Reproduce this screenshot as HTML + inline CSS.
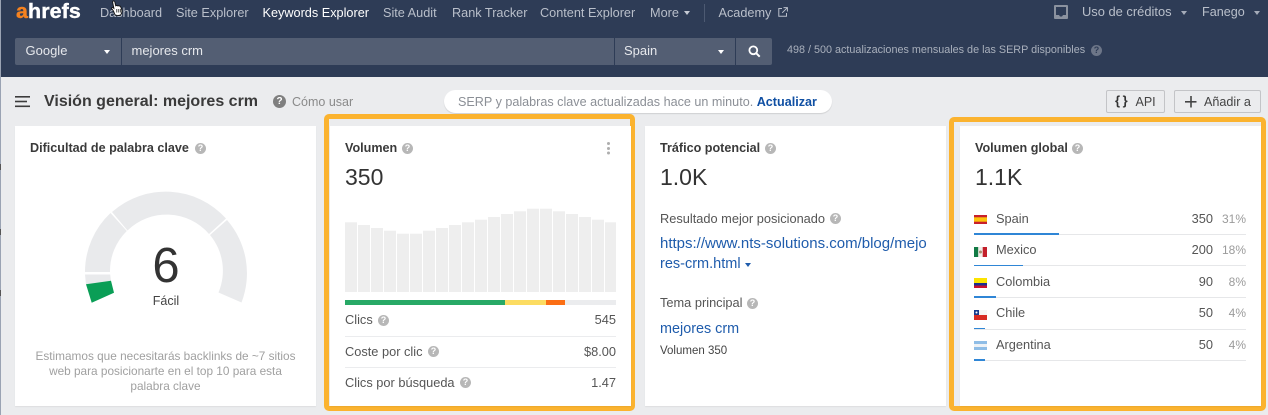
<!DOCTYPE html>
<html lang="es">
<head>
<meta charset="utf-8">
<title>Ahrefs</title>
<style>
html,body{margin:0;padding:0}
body{position:relative;width:1268px;height:415px;overflow:hidden;background:#ebecee;font-family:"Liberation Sans",Arial,sans-serif;color:#444}
.t{position:absolute;white-space:nowrap;line-height:16px}
.n{top:5px;font-size:12.7px;color:#b9bfca}
.b{position:absolute}
.h{position:absolute;width:11px;height:11px;border-radius:50%;background:#b7b7b7;color:#fff;font-size:9px;font-weight:bold;line-height:11px;text-align:center}
.card{position:absolute;top:126px;width:301px;height:280px;background:#fff;box-shadow:0 1px 1px rgba(0,0,0,.06)}
.title{font-size:12.6px;font-weight:bold;color:#3a3a3a;top:140px}
.big{font-size:23px;color:#333;top:165px;line-height:24px}
.r{font-size:12.8px;color:#555}
.orange{position:absolute;border:5px solid #fbb32f;border-radius:5px;box-sizing:border-box}
.tri{position:absolute;width:0;height:0;border-left:3px solid transparent;border-right:3px solid transparent;border-top:4px solid #fff}
.link{color:#1f5cac}
</style>
</head>
<body>
<div class="b" style="left:0;top:0;width:1268px;height:77px;background:#2e3c56"></div>
<div class="b" style="left:0;top:0;width:1px;height:415px;background:#9aa3b3"></div>
<div class="b" style="left:0;top:164px;width:1px;height:6px;background:#555"></div>
<div class="b" style="left:0;top:229px;width:1px;height:6px;background:#555"></div>
<div class="b" style="left:0;top:290px;width:1px;height:6px;background:#555"></div>

<div class="t" style="left:16px;top:0;font-size:20px;line-height:24px;font-weight:bold;color:#fff;letter-spacing:.1px;transform:scaleX(1.07);transform-origin:0 0;-webkit-text-stroke:.4px #fff"><span style="color:#f5821f;-webkit-text-stroke:.4px #f5821f">a</span>hrefs</div>

<div class="t n" style="left:100px">Dashboard</div>
<div class="t n" style="left:176px">Site Explorer</div>
<div class="t n" style="left:262.5px;color:#fff">Keywords Explorer</div>
<div class="t n" style="left:383px">Site Audit</div>
<div class="t n" style="left:452px">Rank Tracker</div>
<div class="t n" style="left:540px">Content Explorer</div>
<div class="t n" style="left:650px">More</div>
<div class="tri" style="left:684px;top:11px;border-top-color:#c6cbd4"></div>
<div class="b" style="left:704px;top:4px;width:1px;height:18px;background:#4d5a72"></div>
<div class="t n" style="left:718.5px">Academy</div>
<svg class="b" style="left:778px;top:7px" width="10" height="10" viewBox="0 0 10 10" fill="none" stroke="#b9bfca" stroke-width="1"><path d="M4 1.5H.8v7.7h7.700V6M5.500.6h3.900v3.900M9.200.8 4.200 5.800"/></svg>

<svg class="b" style="left:110px;top:0" width="15" height="18" viewBox="0 0 15 18"><path d="M3 1.2c.7-.6 1.600-.2 1.800.7l.9 4 .6-.3c.5-.2 1-.1 1.300.3.500-.3 1.100-.2 1.500.2.500-.2 1.100-.1 1.400.4l1.400 3.500c.3 1 .2 2-.3 3l-.8 1.800c-1.800.8-4 .8-5.800 0L3.500 11 1.700 8.700c-.5-.7.400-1.600 1.200-1.100l1 .8L2.700 2.600c-.1-.5 0-1 .3-1.400z" fill="#fff" stroke="#111" stroke-width=".9"/><path d="M6.800 9v3.500M8.800 9v3.500M10.700 9v3.500" stroke="#111" stroke-width=".8"/></svg>

<svg class="b" style="left:1054px;top:5px" width="14" height="14" viewBox="0 0 14 14"><path fill-rule="evenodd" d="M1 0h12a1 1 0 0 1 1 1v12a1 1 0 0 1-1 1H1a1 1 0 0 1-1-1V1a1 1 0 0 1 1-1zM2 2v8h3l1 1.500h2l1-1.500h3V2z" fill="#8b929f"/></svg>
<div class="t n" style="left:1082px;top:4px;font-size:12.9px">Uso de créditos</div>
<div class="tri" style="left:1181px;top:11px;border-top-color:#a5acb9"></div>
<div class="t n" style="left:1202px;top:4px;font-size:12.6px">Fanego</div>
<div class="tri" style="left:1253.5px;top:11px;border-top-color:#a5acb9"></div>

<div class="b" style="left:15px;top:38px;width:106px;height:27px;background:#535e73;border-radius:2px 0 0 2px"></div>
<div class="b" style="left:122px;top:38px;width:491.5px;height:27px;background:#535e73"></div>
<div class="b" style="left:614.5px;top:38px;width:120.5px;height:27px;background:#535e73"></div>
<div class="b" style="left:736px;top:38px;width:36px;height:27px;background:#535e73;border-radius:0 2px 2px 0"></div>
<div class="t" style="left:25.500px;top:43px;font-size:13px;color:#e6e8ec">Google</div>
<div class="tri" style="left:104px;top:49.5px;border-top-color:#fff"></div>
<div class="t" style="left:131.500px;top:43px;font-size:13px;color:#e6e8ec">mejores crm</div>
<div class="t" style="left:624px;top:43px;font-size:13px;color:#e6e8ec">Spain</div>
<div class="tri" style="left:718px;top:49.5px;border-top-color:#fff"></div>
<svg class="b" style="left:748px;top:45px" width="13" height="13" viewBox="0 0 13 13" fill="none" stroke="#fff"><circle cx="5.300" cy="5.300" r="3.900" stroke-width="1.800"/><path d="M8.200 8.200l3.500 3.500" stroke-width="2"/></svg>
<div class="t" style="left:787px;top:42px;font-size:10.8px;color:#a9b0bc">498 / 500 actualizaciones mensuales de las SERP disponibles</div>
<div class="h" style="left:1091px;top:45px;background:#6d7688;color:#2e3c56">?</div>

<svg class="b" style="left:15px;top:96px" width="16" height="12" viewBox="0 0 16 12" fill="#3c3c3c"><rect width="15" height="1.600"/><rect y="4.700" width="12" height="1.600"/><rect y="9.500" width="15" height="1.600"/></svg>
<div class="t" style="left:44px;top:94px;font-size:16px;font-weight:bold;color:#3a3a3a">Visión general: mejores crm</div>
<div class="h" style="left:273px;top:95px;width:13px;height:13px;line-height:13px;font-size:10px;background:#7f7f7f">?</div>
<div class="t" style="left:292px;top:94px;font-size:12.500px;color:#8a8a8a">Cómo usar</div>

<div class="b" style="left:444px;top:90px;width:388px;height:23px;background:#fff;border-radius:12px;box-shadow:0 1px 1px rgba(0,0,0,.12)"></div>
<div class="t" style="left:458px;top:94px;font-size:12.6px;color:#8b8f96">SERP y palabras clave actualizadas hace un minuto. <b style="color:#0f4fa3">Actualizar</b></div>

<div class="b" style="left:1106px;top:90px;width:59px;height:23px;box-sizing:border-box;border:1px solid #c3c4c7;border-radius:2px"></div>
<div class="t" style="left:1115px;top:93px;font-size:13px;font-weight:bold;color:#333">{&thinsp;}</div>
<div class="t" style="left:1135.500px;top:94px;font-size:12.500px;color:#444">API</div>
<div class="b" style="left:1174px;top:90px;width:87px;height:23px;box-sizing:border-box;border:1px solid #c3c4c7;border-radius:2px"></div>
<svg class="b" style="left:1185px;top:96px" width="12" height="12" viewBox="0 0 12 12" fill="#444"><rect x="5.200" y="0" width="1.600" height="11.500"/><rect x="0" y="5" width="11.500" height="1.600"/></svg>
<div class="t" style="left:1204px;top:94px;font-size:12.600px;color:#444">Añadir a</div>

<div class="orange" style="left:324px;top:113.500px;width:311px;height:297.500px"></div>
<div class="orange" style="left:949px;top:117px;width:317px;height:294px"></div>

<div class="card" style="left:15px"></div>
<div class="card" style="left:330px"></div>
<div class="card" style="left:645px"></div>
<div class="card" style="left:960px"></div>

<div class="t title" style="left:30px">Dificultad de palabra clave</div>
<div class="h" style="left:195px;top:143px">?</div>
<svg class="b" style="left:70px;top:180px" width="190" height="130" viewBox="70 180 190 130">
<g fill="#e9eaec">
<path d="M85 272A81 81 0 0 1 110.500 213L126.800 231A56 56 0 0 0 110 272Z"/>
<path d="M112 212A81 81 0 0 1 226 218.500L209 234A56 56 0 0 0 127.500 230.500Z"/>
<path d="M227 220A81 81 0 0 1 241.500 302.500L218.500 292.500A56 56 0 0 0 210 235Z"/>
<path d="M85 274.500H110.200L111 281 86 284.500Z"/>
</g>
<path d="M86 284.300L111 280.700 114 292.700 91.700 302.700Z" fill="#0a9e56"/>
</svg>
<div class="t" style="left:116px;top:240px;width:100px;text-align:center;font-size:49px;line-height:52px;color:#333">6</div>
<div class="t" style="left:116px;top:293px;width:100px;text-align:center;font-size:12.500px;color:#444">Fácil</div>
<div class="t" style="left:15px;top:349px;width:301px;text-align:center;font-size:11.800px;line-height:15px;color:#a0a0a0;white-space:normal">Estimamos que necesitarás backlinks de ~7 sitios<br>web para posicionarte en el top 10 para esta<br>palabra clave</div>

<div class="t title" style="left:345px">Volumen</div>
<div class="h" style="left:402px;top:143px">?</div>
<svg class="b" style="left:606px;top:141px" width="5" height="15" viewBox="0 0 5 15" fill="#aeaeae"><circle cx="2.500" cy="2.500" r="1.500"/><circle cx="2.500" cy="7.500" r="1.500"/><circle cx="2.500" cy="12" r="1.500"/></svg>
<div class="t big" style="left:345px">350</div>
<svg class="b" style="left:345px;top:205px" width="271" height="88" viewBox="345 205 271 88" fill="#eeeeee">
<rect x="345" y="222.300" width="12" height="69.700"/><rect x="358" y="225" width="12" height="67"/><rect x="371" y="228" width="12" height="64"/><rect x="384" y="230.700" width="12" height="61.300"/><rect x="397" y="233.700" width="12" height="58.300"/><rect x="410" y="233.700" width="12" height="58.300"/><rect x="423" y="230.700" width="12" height="61.300"/><rect x="436" y="228" width="12" height="64"/><rect x="449" y="225" width="12" height="67"/><rect x="462" y="222.300" width="12" height="69.700"/><rect x="475" y="219.700" width="12" height="72.300"/><rect x="488" y="217" width="12" height="75"/><rect x="501" y="214" width="12" height="78"/><rect x="514" y="211.300" width="12" height="80.700"/><rect x="527" y="208.700" width="12" height="83.300"/><rect x="540" y="208.700" width="12" height="83.300"/><rect x="553" y="211.300" width="12" height="80.700"/><rect x="566" y="214" width="12" height="78"/><rect x="579" y="217" width="12" height="75"/><rect x="592" y="219.700" width="12" height="72.300"/><rect x="605" y="222.300" width="11" height="69.700"/>
</svg>
<div class="b" style="left:345px;top:300px;width:271px;height:5px;background:#ebecee"></div>
<div class="b" style="left:345px;top:300px;width:160px;height:5px;background:#28a966"></div>
<div class="b" style="left:505px;top:300px;width:41px;height:5px;background:#fcdc62"></div>
<div class="b" style="left:546px;top:300px;width:19px;height:5px;background:#fb6e14"></div>
<div class="t r" style="left:345px;top:312px">Clics</div><div class="h" style="left:378px;top:315px">?</div>
<div class="t r" style="right:652px;top:312px">545</div>
<div class="b" style="left:345px;top:336px;width:271px;height:1px;background:#ebecee"></div>
<div class="t r" style="left:345px;top:344px">Coste por clic</div><div class="h" style="left:428px;top:346px">?</div>
<div class="t r" style="right:652px;top:344px">$8.00</div>
<div class="b" style="left:345px;top:367px;width:271px;height:1px;background:#ebecee"></div>
<div class="t r" style="left:345px;top:375px">Clics por búsqueda</div><div class="h" style="left:460px;top:377px">?</div>
<div class="t r" style="right:652px;top:375px">1.47</div>

<div class="t title" style="left:660px">Tráfico potencial</div>
<div class="h" style="left:765px;top:143px">?</div>
<div class="t big" style="left:660px">1.0K</div>
<div class="t r" style="left:660px;top:211px">Resultado mejor posicionado</div>
<div class="h" style="left:830px;top:213px">?</div>
<div class="t link" style="left:660px;top:233px;font-size:15px;line-height:21px">https://www.nts-solutions.com/blog/mejo</div>
<div class="t link" style="left:660px;top:254px;font-size:14.5px;line-height:21px">res-crm.html</div>
<div class="tri" style="left:745px;top:263px;border-top-color:#1f5cac"></div>
<div class="t r" style="left:660px;top:295px">Tema principal</div>
<div class="h" style="left:747px;top:298px">?</div>
<div class="t link" style="left:660px;top:321px;font-size:14.4px">mejores crm</div>
<div class="t" style="left:660px;top:343px;font-size:11.500px;color:#444">Volumen 350</div>

<div class="t title" style="left:975px">Volumen global</div>
<div class="h" style="left:1072px;top:143px">?</div>
<div class="t big" style="left:975px">1.1K</div>

<svg class="b" style="left:974px;top:215px" width="13" height="9" viewBox="0 0 13 9"><rect width="13" height="9" fill="#c8202c"/><rect y="2.300" width="13" height="4.400" fill="#fcc30b"/></svg>
<div class="t r" style="left:996px;top:211px">Spain</div>
<div class="t r" style="right:55px;top:211px">350</div>
<div class="t" style="right:22px;top:211px;font-size:12px;color:#9b9b9b">31%</div>
<div class="b" style="left:974px;top:234px;width:272px;height:1px;background:#e6e7e9"></div>
<div class="b" style="left:974px;top:233px;width:85px;height:2px;background:#2f86d6"></div>

<svg class="b" style="left:974px;top:247px" width="13" height="10" viewBox="0 0 13 10"><rect width="4.300" height="10" fill="#127a45"/><rect x="4.300" width="4.400" height="10" fill="#f2eeea"/><rect x="8.700" width="4.300" height="10" fill="#c21f2a"/><circle cx="6.500" cy="5" r="1.500" fill="#a98e6e"/></svg>
<div class="t r" style="left:996px;top:242px">Mexico</div>
<div class="t r" style="right:55px;top:242px">200</div>
<div class="t" style="right:22px;top:242px;font-size:12px;color:#9b9b9b">18%</div>
<div class="b" style="left:974px;top:265px;width:272px;height:1px;background:#e6e7e9"></div>
<div class="b" style="left:974px;top:265px;width:49px;height:1px;background:#2f86d6"></div>

<svg class="b" style="left:974px;top:278px" width="13" height="10" viewBox="0 0 13 10"><rect width="13" height="10" fill="#c8102e"/><rect width="13" height="5" fill="#fce300"/><rect y="5" width="13" height="2.500" fill="#1c2f8e"/></svg>
<div class="t r" style="left:996px;top:274px">Colombia</div>
<div class="t r" style="right:55px;top:274px">90</div>
<div class="t" style="right:22px;top:274px;font-size:12px;color:#9b9b9b">8%</div>
<div class="b" style="left:974px;top:297px;width:272px;height:1px;background:#e6e7e9"></div>
<div class="b" style="left:974px;top:296px;width:22px;height:2px;background:#2f86d6"></div>

<svg class="b" style="left:974px;top:310px" width="13" height="10" viewBox="0 0 13 10"><rect width="13" height="5" fill="#f5f5f5"/><rect y="5" width="13" height="5" fill="#d72b23"/><rect width="5" height="5" fill="#173b8f"/><circle cx="2.500" cy="2.500" r="1" fill="#fff"/></svg>
<div class="t r" style="left:996px;top:305px">Chile</div>
<div class="t r" style="right:55px;top:305px">50</div>
<div class="t" style="right:22px;top:305px;font-size:12px;color:#9b9b9b">4%</div>
<div class="b" style="left:974px;top:329px;width:272px;height:1px;background:#e6e7e9"></div>
<div class="b" style="left:974px;top:328px;width:11px;height:1px;background:#2f86d6"></div>

<svg class="b" style="left:974px;top:341px" width="13" height="9" viewBox="0 0 13 9"><rect width="13" height="9" fill="#8fbde6"/><rect y="3" width="13" height="3" fill="#eef2f6"/></svg>
<div class="t r" style="left:996px;top:337px">Argentina</div>
<div class="t r" style="right:55px;top:337px">50</div>
<div class="t" style="right:22px;top:337px;font-size:12px;color:#9b9b9b">4%</div>
<div class="b" style="left:974px;top:360px;width:272px;height:1px;background:#e6e7e9"></div>
<div class="b" style="left:974px;top:359px;width:11px;height:2px;background:#2f86d6"></div>
</body>
</html>
